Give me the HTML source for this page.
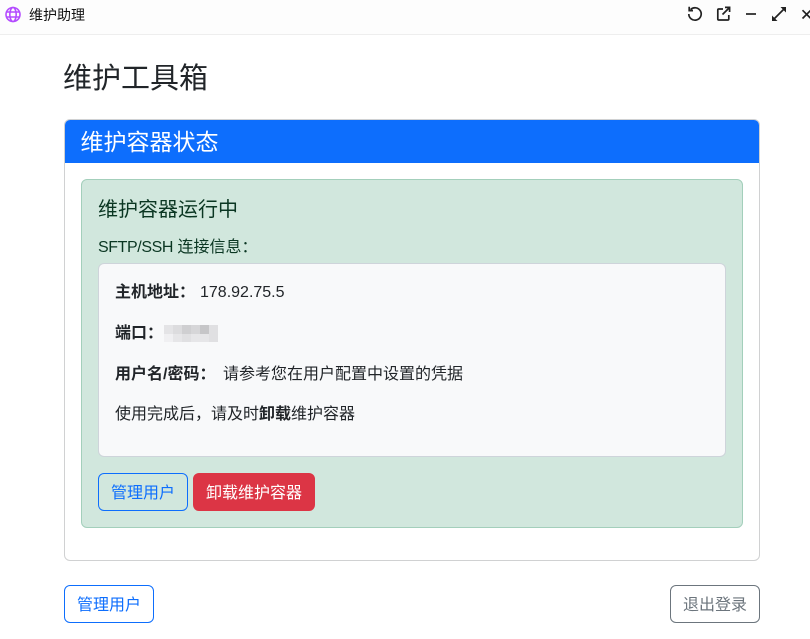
<!DOCTYPE html>
<html lang="zh-CN">
<head>
<meta charset="utf-8">
<title>维护助理</title>
<style>
*{box-sizing:border-box}
html,body{margin:0;padding:0;width:810px;height:639px;overflow:hidden;background:#fff}
body{position:relative;font-family:"Liberation Sans","Noto Sans CJK SC",sans-serif;font-size:16px;color:#212529}
.a{position:absolute;white-space:nowrap}
.bar{left:0;top:0;width:810px;height:35px;background:#fdfdfd;border-bottom:1px solid #eeeeee}
.card{left:64px;top:119px;width:696px;height:442px;border:1px solid #d0d1d2;border-radius:6px;overflow:hidden;background:#fff}
.hd{left:0;top:0;width:694px;height:43px;background:#0d6efd}
.alert{left:81px;top:179px;width:662px;height:349px;background:#d1e7dd;border:1px solid #a3cfbb;border-radius:6px}
.box{left:98px;top:263px;width:628px;height:194px;background:#f8f9fa;border:1px solid #ced4da;border-radius:6px}
.btn{height:38px;line-height:40px;border:1px solid #0d6efd;border-radius:6px;text-align:center;color:#0d6efd;width:90px}
.t{line-height:24px}
b{font-weight:700}
svg{position:absolute;overflow:visible}
.blur i{position:absolute;display:block;width:9px;height:9px}
</style>
</head>
<body>
<div class="a bar"></div>
<svg style="left:0;top:0" width="810" height="35" viewBox="0 0 810 35" fill="none" stroke="#222" stroke-width="1.7">
<g stroke="#b44dff" stroke-width="1.6"><circle cx="13" cy="14.5" r="7"/><ellipse cx="13" cy="14.5" rx="3.2" ry="7"/><path d="M6.4 12h13.2M6.4 17h13.2"/></g>
<path d="M690.6 9.6A6.2 6.2 0 1 1 688.8 14"/><path d="M689.2 6.8v3.8h3.8"/>
<path d="M723 9H718.8a1 1 0 0 0-1 1v9a1 1 0 0 0 1 1h9a1 1 0 0 0 1-1V15"/><path d="M722.5 14.5 729.4 7.6"/><path d="M725 7.4h4.6V12"/>
<path d="M746 14h10"/>
<path d="M774.5 18.5 783.5 9.5"/><path d="M780.5 7h5.5v5.5zM772 15.5v5.5h5.5z" fill="#222" stroke="none"/>
<path d="M802.5 10.2 810.8 18.5M810.8 10.2 802.5 18.5"/>
</svg>
<div class="a" style="left:29px;top:5px;font-size:14px;line-height:20px;color:#111">维护助理</div>

<div class="a" style="left:63px;top:59px;font-size:29px;line-height:40px">维护工具箱</div>

<div class="a card"><div class="a hd"></div></div>
<div class="a" style="left:80.5px;top:128px;font-size:23px;line-height:28px;color:#fff">维护容器状态</div>

<div class="a alert"></div>
<div class="a" style="left:98px;top:198px;font-size:20px;line-height:24px;color:#0a3622">维护容器运行中</div>
<div class="a t" style="left:98px;top:236px;color:#0a3622"><span style="letter-spacing:-.4px">SFTP/SSH</span> 连接信息&#xFF1A;</div>

<div class="a box"></div>
<div class="a t" style="left:115px;top:281px"><b>主机地址&#xFF1A;</b></div>
<div class="a t" style="left:200px;top:281px">178.92.75.5</div>
<div class="a t" style="left:115px;top:322px"><b>端口&#xFF1A;</b></div>
<div class="a blur" style="left:164px;top:325px;width:54px;height:17px;background:#e6e6e8;overflow:hidden">
<i style="left:0;top:0;background:#e4e4e6"></i><i style="left:9px;top:0;background:#dcdcde"></i><i style="left:18px;top:0;background:#cfcfd1"></i><i style="left:27px;top:0;background:#d6d6d8"></i><i style="left:36px;top:0;background:#c6c6c8"></i><i style="left:45px;top:0;background:#e0e0e2"></i>
<i style="left:0;top:9px;background:#f0f0f2"></i><i style="left:9px;top:9px;background:#e6e6e8"></i><i style="left:18px;top:9px;background:#e0e0e2"></i><i style="left:27px;top:9px;background:#e6e6e8"></i><i style="left:36px;top:9px;background:#e6e6e8"></i><i style="left:45px;top:9px;background:#e0e0e2"></i></div>
<div class="a t" style="left:115px;top:363px"><b>用户名/密码&#xFF1A;</b></div>
<div class="a t" style="left:223px;top:363px">请参考您在用户配置中设置的凭据</div>
<div class="a t" style="left:115px;top:403px">使用完成后&#xFF0C;请及时<b>卸载</b>维护容器</div>

<div class="a btn" style="left:98px;top:473px">管理用户</div>
<div class="a btn" style="left:193px;top:473px;width:122px;background:#dc3545;border-color:#dc3545;color:#fff">卸载维护容器</div>
<div class="a btn" style="left:64px;top:585px">管理用户</div>
<div class="a btn" style="left:670px;top:585px;border-color:#6c757d;color:#6c757d">退出登录</div>
</body>
</html>
